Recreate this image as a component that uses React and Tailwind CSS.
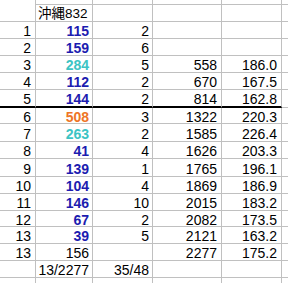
const BLUE = "text-[#1c1cb0] font-bold";
const TEAL = "text-[#3cc4c4] font-bold";
const ORANGE = "text-[#ee7526] font-bold";

const rows = [
  { h: "h-[17px]", a: "1", b: "115", bc: BLUE, c: "2" },
  { h: "h-[17px]", a: "2", b: "159", bc: BLUE, c: "6" },
  { h: "h-[17px]", a: "3", b: "284", bc: TEAL, c: "5", d: "558", e: "186.0" },
  { h: "h-[17px]", a: "4", b: "112", bc: BLUE, c: "2", d: "670", e: "167.5" },
  { h: "h-[18px]", a: "5", b: "144", bc: BLUE, c: "2", d: "814", e: "162.8", thick: true },
  { h: "h-[16px]", a: "6", b: "508", bc: ORANGE, c: "3", d: "1322", e: "220.3" },
  { h: "h-[18px]", a: "7", b: "263", bc: TEAL, c: "2", d: "1585", e: "226.4" },
  { h: "h-[17px]", a: "8", b: "41", bc: BLUE, c: "4", d: "1626", e: "203.3" },
  { h: "h-[18px]", a: "9", b: "139", bc: BLUE, c: "1", d: "1765", e: "196.1" },
  { h: "h-[17px]", a: "10", b: "104", bc: BLUE, c: "4", d: "1869", e: "186.9" },
  { h: "h-[17px]", a: "11", b: "146", bc: BLUE, c: "10", d: "2015", e: "183.2" },
  { h: "h-[16px]", a: "12", b: "67", bc: BLUE, c: "2", d: "2082", e: "173.5" },
  { h: "h-[17px]", a: "13", b: "39", bc: BLUE, c: "5", d: "2121", e: "163.2" },
  { h: "h-[17px]", a: "13", b: "156", bc: "", c: "", d: "2277", e: "175.2" },
  { h: "h-[17px]", a: "", b: "13/2277", bc: "", c: "35/48" },
];

function Row({ r }) {
  const bb = r.thick ? "border-b-2 border-b-black" : "border-b border-b-[#c0c0c0]";
  const cell = `box-border border-r border-r-[#c0c0c0] ${bb} flex items-center justify-end pt-[2px]`;
  return (
    <div className={`flex ${r.h}`}>
      <div className={`${cell} w-[36px] pr-[4px]`}>{r.a}</div>
      <div className={`${cell} w-[57px] pr-[3px] ${r.bc}`}>{r.b}</div>
      <div className={`${cell} w-[60px] pr-[3px]`}>{r.c}</div>
      <div className={`${cell} w-[69px] pr-[4px]`}>{r.d}</div>
      <div className={`${cell} w-[60px] pr-[4px]`}>{r.e}</div>
      <div className="box-border flex-1 border-b border-b-[#c0c0c0]"></div>
    </div>
  );
}

export default function App() {
  const line = "box-border border-r border-r-[#c0c0c0]";
  return (
    <div className="w-[288px] h-[283px] overflow-hidden bg-white text-black text-[14px] leading-none font-['Liberation_Sans',Arial,sans-serif]">
      <div className="flex h-[5px]">
        <div className={`${line} w-[36px]`}></div>
        <div className={`${line} border-b border-b-[#c0c0c0] w-[57px]`}></div>
        <div className={`${line} border-b border-b-[#c0c0c0] w-[60px]`}></div>
        <div className={`${line} border-b border-b-[#c0c0c0] w-[69px]`}></div>
        <div className={`${line} border-b border-b-[#c0c0c0] w-[60px]`}></div>
        <div className="box-border flex-1 border-b border-b-[#c0c0c0]"></div>
      </div>
      <div className="flex h-[17px]">
        <div className={`${line} border-b border-b-[#c0c0c0] w-[36px]`}></div>
        <div className={`${line} border-b border-b-[#c0c0c0] w-[57px] flex items-center pl-[2px] pt-[1px] text-[13.5px] font-['Liberation_Sans','Noto_Sans_CJK_JP',sans-serif]`}>沖縄832</div>
        <div className={`${line} border-b border-b-[#c0c0c0] w-[60px]`}></div>
        <div className={`${line} border-b border-b-[#c0c0c0] w-[69px]`}></div>
        <div className={`${line} border-b border-b-[#c0c0c0] w-[60px]`}></div>
        <div className="box-border flex-1 border-b border-b-[#c0c0c0]"></div>
      </div>
      {rows.map((r, i) => (
        <Row key={i} r={r} />
      ))}
      <div className="flex h-[10px]">
        <div className={`${line} w-[36px]`}></div>
        <div className={`${line} w-[57px]`}></div>
        <div className={`${line} w-[60px]`}></div>
        <div className={`${line} w-[69px]`}></div>
        <div className={`${line} w-[60px]`}></div>
        <div className="flex-1"></div>
      </div>
    </div>
  );
}
